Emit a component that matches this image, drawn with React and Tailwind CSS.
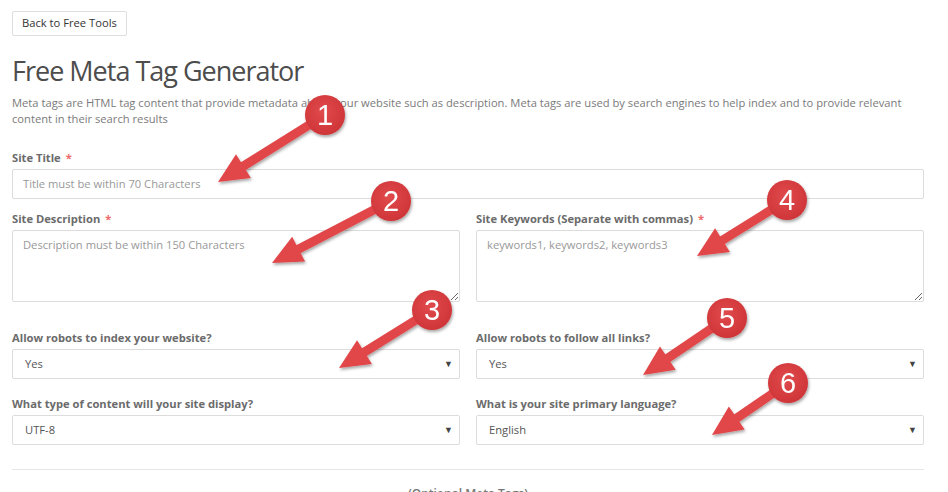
import React from 'react'

const arrows = [
  { n: 1, c: [325, 115], t: [218, 182] },
  { n: 2, c: [391, 201], t: [272, 263] },
  { n: 3, c: [432, 310], t: [339, 368] },
  { n: 4, c: [787, 200], t: [697, 256] },
  { n: 5, c: [727, 318], t: [643, 375] },
  { n: 6, c: [788, 383], t: [712, 435] },
]

const Arrow = ({ n, c, t }) => {
  const dx = t[0] - c[0]
  const dy = t[1] - c[1]
  const len = Math.hypot(dx, dy)
  const ux = dx / len
  const uy = dy / len
  const nx = -uy
  const ny = ux
  const L = 30
  const W = 14
  const bx = t[0] - ux * L
  const by = t[1] - uy * L
  const head = `${t[0]},${t[1]} ${bx + nx * W},${by + ny * W} ${bx - nx * W},${by - ny * W}`
  return (
    <g filter="url(#shadow)">
      <line x1={c[0]} y1={c[1]} x2={bx + ux * 2} y2={by + uy * 2} stroke="#e1474a" strokeWidth="9" />
      <polygon points={head} fill="#e1474a" />
      <circle cx={c[0]} cy={c[1]} r="20" fill="url(#ball)" />
      <text
        x={c[0]}
        y={c[1] + 10}
        textAnchor="middle"
        fill="#fff"
        fontSize="29"
        fontFamily="'Liberation Sans', Arial, sans-serif"
      >
        {n}
      </text>
    </g>
  )
}

const Label = ({ children, req, className = '' }) => (
  <label className={`block text-[11.2px] leading-[17px] font-bold text-[#6b6b6b] ${className}`}>
    {children}
    {req && <span className="text-[#ee6a6a] ml-[5px]">*</span>}
  </label>
)

const Select = ({ value }) => (
  <div className="relative">
    <select
      defaultValue={value}
      className="w-full h-[30px] appearance-none bg-white border border-[#dcdcdc] rounded-[2px] pl-[12px] text-[11.2px] text-[#555] outline-none"
    >
      <option>{value}</option>
    </select>
    <span className="pointer-events-none absolute right-[7px] top-[8px] text-[9px] text-[#444]">▼</span>
  </div>
)

export default function App() {
  return (
    <div
      className="relative w-[948px] h-[492px] overflow-hidden bg-white"
      style={{ fontFamily: "'Open Sans', 'Noto Sans', sans-serif" }}
    >
      <div className="w-[912px] ml-[12px] pt-[9px]">
        <button className="h-[25px] px-[9px] border border-[#dedede] rounded-[2px] bg-white text-[11.2px] text-[#333]">
          Back to Free Tools
        </button>

        <h1 className="mt-[15px] text-[27px] leading-[40px] tracking-[-1px] text-[#4d4d4d]">Free Meta Tag Generator</h1>

        <p className="mt-[4px] text-[11.2px] leading-[16.5px] text-[#7a7a7a]">
          Meta tags are HTML tag content that provide metadata about your website such as description. Meta tags are used by search engines to help index and to provide relevant content in their search results
        </p>

        <Label req className="mt-[21px]">Site Title</Label>
        <input
          placeholder="Title must be within 70 Characters"
          className="mt-[3px] w-full h-[30px] border border-[#dcdcdc] rounded-[2px] px-[10px] text-[11.2px] placeholder:text-[#999] outline-none"
        />

        <div className="grid grid-cols-2 gap-x-[16px]">
          <div>
            <Label req className="mt-[11px]">Site Description</Label>
            <textarea
              placeholder="Description must be within 150 Characters"
              className="block mt-[3px] w-full h-[72px] border border-[#dcdcdc] rounded-[2px] px-[10px] py-[6px] text-[11.2px] placeholder:text-[#999] outline-none resize-y"
            />
            <Label className="mt-[27px]">Allow robots to index your website?</Label>
            <div className="mt-[3px]"><Select value="Yes" /></div>
            <Label className="mt-[16px]">What type of content will your site display?</Label>
            <div className="mt-[3px]"><Select value="UTF-8" /></div>
          </div>
          <div>
            <Label req className="mt-[11px]">Site Keywords (Separate with commas)</Label>
            <textarea
              placeholder="keywords1, keywords2, keywords3"
              className="block mt-[3px] w-full h-[72px] border border-[#dcdcdc] rounded-[2px] px-[10px] py-[6px] text-[11.2px] placeholder:text-[#999] outline-none resize-y"
            />
            <Label className="mt-[27px]">Allow robots to follow all links?</Label>
            <div className="mt-[3px]"><Select value="Yes" /></div>
            <Label className="mt-[16px]">What is your site primary language?</Label>
            <div className="mt-[3px]"><Select value="English" /></div>
          </div>
        </div>

        <div className="mt-[24px] border-t border-[#e6e6e6]" />
        <p className="mt-[15px] text-center text-[12px] font-semibold text-[#777]">(Optional Meta Tags)</p>
      </div>

      <svg className="absolute inset-0 pointer-events-none" width="948" height="492" viewBox="0 0 948 492">
        <defs>
          <filter id="shadow" x="-20%" y="-20%" width="140%" height="140%">
            <feDropShadow dx="1" dy="2" stdDeviation="1.5" floodColor="#000" floodOpacity="0.35" />
          </filter>
          <radialGradient id="ball" cx="45%" cy="40%" r="60%">
            <stop offset="0%" stopColor="#e04a4c" />
            <stop offset="100%" stopColor="#cf3538" />
          </radialGradient>
        </defs>
        {arrows.map((a) => (
          <Arrow key={a.n} {...a} />
        ))}
      </svg>
    </div>
  )
}
